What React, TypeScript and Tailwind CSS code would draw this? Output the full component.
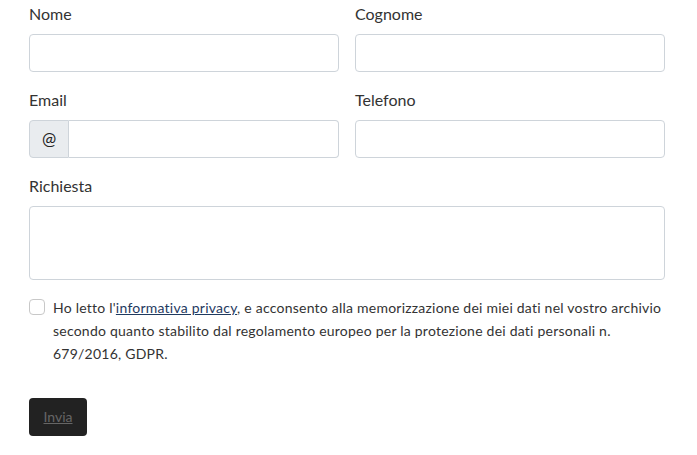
import { useState } from 'react'

const inputCls =
  'block h-[38px] w-full rounded-[4px] border border-[#ced4da] bg-white px-3 text-base text-[#495057] outline-none'

const Field = ({ label, children }: { label: string; children: React.ReactNode }) => (
  <div className="flex flex-col">
    <label className="mb-2 text-base leading-6 text-[#333]">{label}</label>
    {children}
  </div>
)

export default function App() {
  const [accepted, setAccepted] = useState(false)

  return (
    <div className="min-h-screen bg-white pt-[2px] pl-[29px] font-['Lato',sans-serif] text-[#333]">
      <form className="flex w-[636px] flex-col" onSubmit={(e) => e.preventDefault()}>
        <div className="grid grid-cols-2 gap-x-4 gap-y-4">
          <Field label="Nome">
            <input type="text" className={inputCls} />
          </Field>
          <Field label="Cognome">
            <input type="text" className={inputCls} />
          </Field>
          <Field label="Email">
            <div className="flex h-[38px]">
              <span className="flex w-10 items-center justify-center rounded-l-[4px] border border-[#ced4da] bg-[#e9ecef] text-[17px] text-[#222]">
                @
              </span>
              <input
                type="email"
                className="h-full min-w-0 flex-1 rounded-r-[4px] border border-l-0 border-[#ced4da] bg-white px-3 text-base text-[#495057] outline-none"
              />
            </div>
          </Field>
          <Field label="Telefono">
            <input type="tel" className={inputCls} />
          </Field>
          <div className="col-span-2">
            <Field label="Richiesta">
              <textarea className="block h-[74px] w-full resize-none rounded-[4px] border border-[#ced4da] bg-white px-3 py-1.5 text-base text-[#495057] outline-none" />
            </Field>
          </div>
        </div>

        <label className="mt-[16px] flex items-start gap-2 text-sm leading-[23px] tracking-[0.23px] text-[#333]">
          <input
            type="checkbox"
            checked={accepted}
            onChange={(e) => setAccepted(e.target.checked)}
            className="mt-[3px] h-4 w-4 shrink-0 appearance-none rounded-[4px] border border-[#c8c8c8] bg-white"
          />
          <span>
            Ho letto l'
            <a href="#" className="text-[#1f3a5f] underline">
              informativa privacy
            </a>
            , e acconsento alla memorizzazione dei miei dati nel vostro archivio secondo quanto
            stabilito dal regolamento europeo per la protezione dei dati personali n. 679/2016, GDPR.
          </span>
        </label>

        <div className="mt-[33px]">
          <button
            type="submit"
            disabled={!accepted}
            className="h-[38px] w-[58px] rounded-[4px] bg-[#222] text-sm text-[#666] underline"
          >
            Invia
          </button>
        </div>
      </form>
    </div>
  )
}
